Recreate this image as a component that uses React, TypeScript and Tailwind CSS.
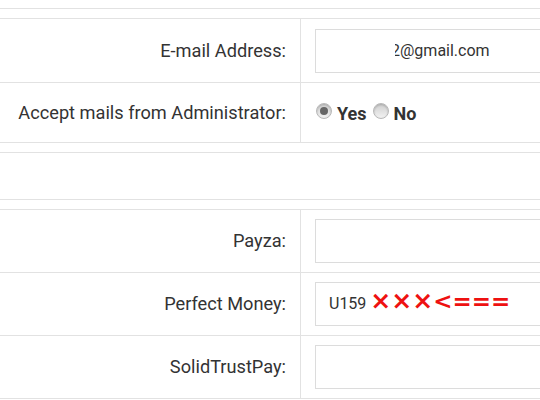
import React from 'react';

const Radio = ({ checked }: { checked?: boolean }) => (
  <span className="inline-flex h-[16px] w-[16px] items-center justify-center rounded-full border border-[#b8b8b8] bg-gradient-to-b from-[#cfcfcf] to-[#f2f2f2] shadow-[inset_0_1px_2px_rgba(0,0,0,0.2)]">
    {checked && <span className="h-[8px] w-[8px] rounded-full bg-[#666]" />}
  </span>
);

const Field = ({ children }: { children?: React.ReactNode }) => (
  <div className="flex h-[44px] w-[260px] shrink-0 items-center overflow-hidden border border-[#dcdcdc] bg-white pl-[13px] text-[16px] text-[#333]">
    {children}
  </div>
);

const Row = ({ label, children, h, last }: { label: string; children?: React.ReactNode; h: string; last?: boolean }) => (
  <div className={`grid grid-cols-[301px_1fr] ${last ? '' : 'border-b border-[#e2e2e2]'}`}>
    <div className={`flex ${h} items-center justify-end border-r border-[#e2e2e2] pr-[14px] text-[18.2px] text-[#333]`}>
      {label}
    </div>
    <div className={`flex ${h} items-center overflow-hidden pl-[14px]`}>{children}</div>
  </div>
);

export default function App() {
  return (
    <div className="h-[400px] w-[540px] overflow-hidden bg-white font-['Roboto',sans-serif]">
      <div className="h-[9px] border-b border-[#e2e2e2]" />
      <div className="mt-[9px] border-y border-[#e2e2e2]">
        <Row label="E-mail Address:" h="h-[63px]">
          <Field>
            <span className="ml-[66px] inline-block overflow-hidden whitespace-nowrap">
              <span className="ml-[-4px]">2@gmail.com</span>
            </span>
          </Field>
        </Row>
        <Row label="Accept mails from Administrator:" h="h-[59px]" last>
          <div className="flex items-end pl-[1px] text-[18px] font-bold text-[#333]">
            <span className="mb-[4px] mr-[5px] flex"><Radio checked /></span>
            <span className="mr-[6px] leading-none">Yes</span>
            <span className="mb-[4px] mr-[5px] flex"><Radio /></span>
            <span className="leading-none">No</span>
          </div>
        </Row>
      </div>
      <div className="mt-[9px] h-[48px] border-y border-[#e2e2e2]" />
      <div className="mt-[9px] border-y border-[#e2e2e2]">
        <Row label="Payza:" h="h-[62px]">
          <Field />
        </Row>
        <Row label="Perfect Money:" h="h-[62px]">
          <Field>
            <span>U159</span>
            <span className="ml-[4px] mt-[-8px] flex items-baseline whitespace-nowrap font-['DejaVu_Sans',sans-serif] font-bold leading-none text-[#ee1111]">
              <span className="text-[25px]">×××</span>
              <span className="text-[23px]">&lt;===</span>
            </span>
          </Field>
        </Row>
        <Row label="SolidTrustPay:" h="h-[62px]" last>
          <Field />
        </Row>
      </div>
    </div>
  );
}
